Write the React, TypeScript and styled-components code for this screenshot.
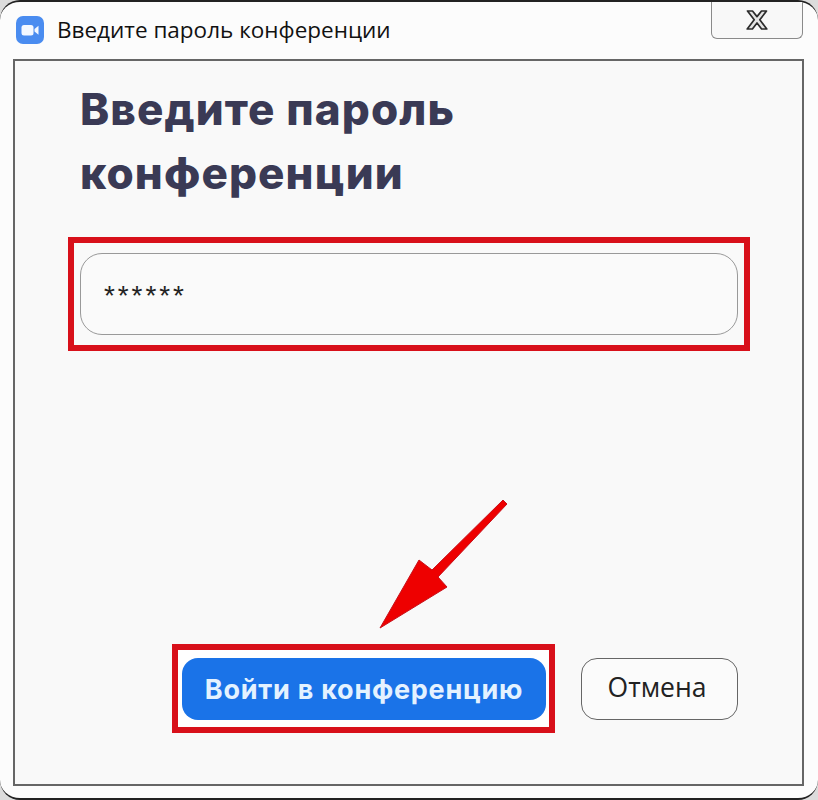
import React from "react";
import styled, { createGlobalStyle } from "styled-components";

const GlobalStyle = createGlobalStyle`
  html, body {
    margin: 0;
    padding: 0;
    background: #dcdcdc;
  }
  * {
    box-sizing: border-box;
  }
`;

function ZoomLogo() {
  return (
    <svg width="28" height="28" viewBox="0 0 28 28">
      <rect width="28" height="28" rx="7" fill="#4a8cf0" />
      <rect x="5.5" y="9" width="12" height="10.5" rx="2.5" fill="#f4f8ff" />
      <path d="M18.5 13 L22.5 9.8 V18.7 L18.5 15.5 Z" fill="#f4f8ff" />
    </svg>
  );
}

function CloseGlyph() {
  return (
    <svg width="24" height="22" viewBox="0 0 24 22">
      <path
        d="M2.5 2 H7.5 L12 7.6 L16.5 2 H21.5 L14.8 10.8 L21.8 20 H16.6 L12 14 L7.4 20 H2.2 L9.2 10.8 Z"
        fill="#e4e4e4"
        stroke="#2b2b2b"
        strokeWidth="1.7"
        strokeLinejoin="round"
      />
    </svg>
  );
}

function App() {
  return (
    <Window>
      <GlobalStyle />
      <TitleBar>
        <ZoomLogo />
        <TitleText>Введите пароль конференции</TitleText>
        <CloseButton>
          <CloseGlyph />
        </CloseButton>
      </TitleBar>
      <Panel>
        <Heading>
          Введите пароль
          <br />
          конференции
        </Heading>
        <InputFrame>
          <PasswordField>******</PasswordField>
        </InputFrame>
        <Footer>
          <ButtonFrame>
            <JoinButton>Войти в конференцию</JoinButton>
          </ButtonFrame>
          <CancelButton>Отмена</CancelButton>
        </Footer>
        <Arrow width="132" height="134" viewBox="0 0 132 134">
          <path
            d="M125 0 L129 4 L60 77 L69 87 L2 128 L41 60 L54 70 Z"
            fill="#ee0000"
            stroke="#c8101a"
            strokeWidth="1"
          />
        </Arrow>
      </Panel>
    </Window>
  );
}

const Window = styled.div`
  display: flex;
  flex-direction: column;
  width: 818px;
  height: 800px;
  padding: 0 14px 12px 13px;
  background: #fcfcfc;
  border-top: 2px solid #222;
  border-bottom: 2px solid #222;
  border-radius: 20px;
  font-family: "Open Sans", "Noto Sans", sans-serif;
`;

const TitleBar = styled.header`
  display: flex;
  align-items: flex-start;
  height: 57px;
  flex-shrink: 0;
  padding: 14px 0 0 3px;
`;

const TitleText = styled.span`
  margin-left: 13px;
  font-size: 22.5px;
  line-height: 28px;
  color: #111;
`;

const CloseButton = styled.div`
  display: flex;
  align-items: center;
  justify-content: center;
  width: 92px;
  height: 37px;
  margin: -14px 1px 0 auto;
  background: #f8f8f8;
  border: 1.5px solid #8a8a8a;
  border-top: none;
  border-radius: 0 0 6px 6px;
`;

const Panel = styled.main`
  position: relative;
  flex: 1;
  display: flex;
  flex-direction: column;
  padding: 16px 52px 0 53px;
  background: #f9f9f9;
  border: 2px solid #666;
`;

const Heading = styled.h1`
  margin: 0 0 0 12px;
  font-family: "Inter", "Noto Sans", sans-serif;
  font-size: 44px;
  font-weight: 800;
  line-height: 64px;
  letter-spacing: 1.1px;
  color: #3a3a55;
`;

const InputFrame = styled.div`
  margin-top: 32px;
  padding: 10px 6px;
  border: 6px solid #d8101a;
`;

const PasswordField = styled.div`
  display: flex;
  align-items: center;
  height: 82px;
  padding: 3px 0 0 23px;
  background: #fafafa;
  border: 1.5px solid #999;
  border-radius: 22px;
  font-family: "Liberation Sans", sans-serif;
  font-size: 28px;
  letter-spacing: 2.9px;
  color: #222;
`;

const Footer = styled.footer`
  display: flex;
  align-items: center;
  justify-content: flex-end;
  gap: 26px;
  margin-top: auto;
  margin-bottom: 51px;
  padding-right: 12px;
`;

const ButtonFrame = styled.div`
  display: flex;
  padding: 8px 3px 7px 4px;
  background: #ffffff;
  border: 6px solid #d8101a;
`;

const JoinButton = styled.div`
  display: flex;
  align-items: center;
  justify-content: center;
  width: 364px;
  height: 62px;
  background: #1a73e8;
  border-radius: 16px;
  font-family: "Inter", "Noto Sans", sans-serif;
  font-size: 27px;
  font-weight: 700;
  letter-spacing: 0.75px;
  color: #e4f2ff;
`;

const CancelButton = styled.div`
  display: flex;
  align-items: center;
  justify-content: center;
  width: 157px;
  height: 62px;
  padding: 0 5px 3px 0;
  background: #fbfbfb;
  border: 1.5px solid #666;
  border-radius: 16px;
  font-size: 26.5px;
  color: #222;
`;

const Arrow = styled.svg`
  position: absolute;
  left: 363px;
  top: 439px;
`;

export default App;
